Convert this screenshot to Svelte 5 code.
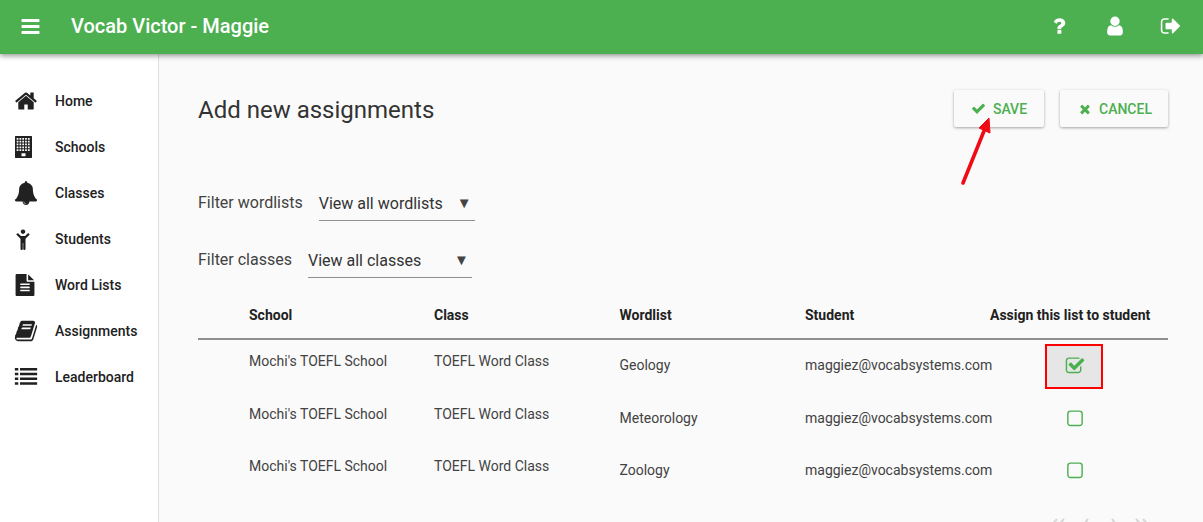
<script>
	// windows of the building icon, 5 x 5 grid plus a door
	let buildingPath = 'M105 75h1209q30 0 30 30v1582q0 30-30 30h-1209q-30 0-30-30v-1582q0-30 30-30z';
	for (let r = 0; r < 5; r++) {
		for (let c = 0; c < 5; c++) {
			buildingPath += `M${200 + c * 210} ${220 + r * 210}h130v130h-130z`;
		}
	}
	buildingPath += 'M560 1360h300v220h-300z';

	const icons = {
		home: 'M1472 992v480q0 26-19 45t-45 19h-384v-384h-256v384h-384q-26 0-45-19t-19-45v-480q0-1 .5-3t.5-3l575-474 575 474q1 2 1 6zm223-69l-62 74q-8 9-21 11h-3q-13 0-21-7l-692-577-692 577q-12 8-24 7-13-2-21-11l-62-74q-8-10-7-23.5t11-21.5l719-599q32-26 76-26t76 26l244 204v-195q0-14 9-23t23-9h192q14 0 23 9t9 23v408l219 182q10 8 11 21.5t-7 23.5z',
		bars: 'M1664 1344v128q0 26-19 45t-45 19h-1408q-26 0-45-19t-19-45v-128q0-26 19-45t45-19h1408q26 0 45 19t19 45zm0-512v128q0 26-19 45t-45 19h-1408q-26 0-45-19t-19-45v-128q0-26 19-45t45-19h1408q26 0 45 19t19 45zm0-512v128q0 26-19 45t-45 19h-1408q-26 0-45-19t-19-45v-128q0-26 19-45t45-19h1408q26 0 45 19t19 45z',
		check: 'M1671 566q0 40-28 68l-724 724-136 136q-28 28-68 28t-68-28l-136-136-362-362q-28-28-28-68t28-68l136-136q28-28 68-28t68 28l294 295 656-657q28-28 68-28t68 28l136 136q28 28 28 68z',
		times: 'M1490 1322q0 40-28 68l-136 136q-28 28-68 28t-68-28l-294-294-294 294q-28 28-68 28t-68-28l-136-136q-28-28-28-68t28-68l294-294-294-294q-28-28-28-68t28-68l136-136q28-28 68-28t68 28l294 294 294-294q28-28 68-28t68 28l136 136q28 28 28 68t-28 68l-294 294 294 294q28 28 28 68z',
		user: 'M1536 1399q0 109-62.5 187t-150.5 78h-854q-88 0-150.5-78t-62.5-187q0-85 8.5-160.5t31.5-152 58.5-131 94-89 134.5-34.5q131 128 313 128t313-128q76 0 134.5 34.5t94 89 58.5 131 31.5 152 8.5 160.5zm-256-887q0 159-112.5 271.5t-271.5 112.5-271.5-112.5-112.5-271.5 112.5-271.5 271.5-112.5 271.5 112.5 112.5 271.5z',
		question: 'M1088 1256v240q0 16-12 28t-28 12h-240q-16 0-28-12t-12-28v-240q0-16 12-28t28-12h240q16 0 28 12t12 28zm316-600q0 54-15.5 101t-35 76.5-55 59.5-57.5 43.5-61 35.5q-41 23-68.5 65t-27.5 67q0 17-12 32.5t-28 15.5h-240q-15 0-25.5-18.5t-10.5-37.5v-45q0-83 65-156.5t143-108.5q59-27 84-56t25-76q0-42-46.5-74t-107.5-32q-65 0-108 29-35 25-107 115-13 16-31 16-12 0-25-8l-164-125q-13-10-15.5-25t5.5-28q160-266 464-266 80 0 161 31t146 83 106 127.5 41 158.5z',
		signout: 'M704 1440q0 4 1 20t.5 26.5-3 23.5-10 19.5-20.5 6.5h-320q-119 0-203.5-84.5t-84.5-203.5v-704q0-119 84.5-203.5t203.5-84.5h320q13 0 22.5 9.5t9.5 22.5q0 4 1 20t.5 26.5-3 23.5-10 19.5-20.5 6.5h-320q-66 0-113 47t-47 113v704q0 66 47 113t113 47h312l11.5 1 11.5 3 8 5.5 7 9 2 13.5zm928-544q0 26-19 45l-544 544q-19 19-45 19t-45-19-19-45v-288h-448q-26 0-45-19t-19-45v-384q0-26 19-45t45-19h448v-288q0-26 19-45t45-19 45 19l544 544q19 19 19 45z',
		bell: 'M912 1696q0-16-16-16-59 0-101.5-42.5t-42.5-101.5q0-16-16-16t-16 16q0 73 51.5 124.5t124.5 51.5q16 0 16-16zm816-288q0 52-38 90t-90 38h-448q0 106-75 181t-181 75-181-75-75-181h-448q-52 0-90-38t-38-90q50-42 91-88t85-119.5 74.5-158.5 50-206 19.5-260q0-152 117-282.5t307-158.5q-8-19-8-39 0-40 28-68t68-28 68 28 28 68q0 20-8 39 190 28 307 158.5t117 282.5q0 139 19.5 260t50 206 74.5 158.5 85 119.5 91 88z',
		file: 'M1596 476q14 14 28 36h-472v-472q22 14 36 28zm-476 164h544v1056q0 40-28 68t-68 28h-1344q-40 0-68-28t-28-68v-1600q0-40 28-68t68-28h800v544q0 40 28 68t68 28zm160 736v-64q0-14-9-23t-23-9h-704q-14 0-23 9t-9 23v64q0 14 9 23t23 9h704q14 0 23-9t9-23zm0-256v-64q0-14-9-23t-23-9h-704q-14 0-23 9t-9 23v64q0 14 9 23t23 9h704q14 0 23-9t9-23zm0-256v-64q0-14-9-23t-23-9h-704q-14 0-23 9t-9 23v64q0 14 9 23t23 9h704q14 0 23-9t9-23z',
		book: 'M1703 478q40 57 18 129l-275 906q-19 64-76.5 107.5t-122.5 43.5h-923q-77 0-148.5-53.5t-99.5-131.5q-24-67-2-127 0-4 3-27t4-37q1-8-3-21.5t-3-19.5q2-11 8-21t16.5-23.5 16.5-23.5q23-38 45-91.5t30-91.5q3-10 .5-30t-.5-28q3-11 17-28t17-23q21-36 42-92t25-90q1-9-2.5-32t.5-28q4-13 22-30.5t22-22.5q19-26 42.5-84.5t27.5-96.5q1-8-3-25.5t-2-26.5q2-8 9-18t18-23 17-21q8-12 16.5-30.5t15-35 16-36 19.5-32 26.5-23.5 36-11.5 47.5 5.5l-1 3q38-9 51-9h761q74 0 114 56t18 130l-274 906q-36 119-71.5 153.5t-128.5 34.5h-869q-27 0-38 15-11 16-1 43 24 70 144 70h923q29 0 56-15.5t35-41.5l300-987q7-22 5-57 38 15 59 43zm-1064 2q-4 13 2 22.5t20 9.5h608q13 0 25.5-9.5t16.5-22.5l21-64q4-13-2-22.5t-20-9.5h-608q-13 0-25.5 9.5t-16.5 22.5zm-83 256q-4 13 2 22.5t20 9.5h608q13 0 25.5-9.5t16.5-22.5l21-64q4-13-2-22.5t-20-9.5h-608q-13 0-25.5 9.5t-16.5 22.5z',
		building: buildingPath,
		child: 'M672 180a170 170 0 1 0 .01 0zM170 560L280 450L520 680H824L1064 450L1175 560L860 880V1650q0 70-90 70q-80 0-80-70V1200H655V1650q0 70-80 70q-90 0-90-70V880Z',
		list: 'M64 224h256v192h-256zM448 224h1280v192h-1280zM64 576h256v192h-256zM448 576h1280v192h-1280zM64 928h256v192h-256zM448 928h1280v192h-1280zM64 1280h256v192h-256zM448 1280h1280v192h-1280z',
		checked: 'M1472 930v318q0 119-84.5 203.5t-203.5 84.5h-832q-119 0-203.5-84.5t-84.5-203.5v-832q0-119 84.5-203.5t203.5-84.5h832q63 0 117 25 15 7 18 23 3 17-9 29l-49 49q-10 10-23 10-3 0-9-2-23-6-45-6h-832q-66 0-113 47t-47 113v832q0 66 47 113t113 47h832q66 0 113-47t47-113v-254q0-13 9-22l64-64q10-10 23-10 6 0 12 3 20 8 20 29zm231-489l-814 814q-24 24-57 24t-57-24l-430-430q-24-24-24-57t24-57l110-110q24-24 57-24t57 24l263 263 647-647q24-24 57-24t57 24l110 110q24 24 24 57t-24 57z',
		square: 'M1312 256h-832q-66 0-113 47t-47 113v832q0 66 47 113t113 47h832q66 0 113-47t47-113v-832q0-66-47-113t-113-47zm288 160v832q0 119-84.5 203.5t-203.5 84.5h-832q-119 0-203.5-84.5t-84.5-203.5v-832q0-119 84.5-203.5t203.5-84.5h832q119 0 203.5 84.5t84.5 203.5z'
	};

	const nav = [
		['home', 'Home', 24],
		['building', 'Schools', 24],
		['bell', 'Classes', 24],
		['child', 'Students', 24],
		['file', 'Word Lists', 22],
		['book', 'Assignments', 24],
		['list', 'Leaderboard', 24]
	];

	const rows = [
		{ wordlist: 'Geology', on: true },
		{ wordlist: 'Meteorology', on: false },
		{ wordlist: 'Zoology', on: false }
	];

	const pager = ['M12 3L5 11M19 3L12 11', 'M13 3L7 11', 'M7 3L13 11', 'M1 3L8 11M8 3L15 11'];
</script>

{#snippet icon(name, size)}
	<svg width={size} height={size} viewBox="0 0 1792 1792" fill="currentColor" fill-rule="evenodd"><path d={icons[name]} /></svg>
{/snippet}

<div class="page">
	<header class="toolbar">
		<span class="menu">{@render icon('bars', 21)}</span>
		<h1>Vocab Victor - Maggie</h1>
		<div class="tools">
			{@render icon('question', 22)}
			{@render icon('user', 22)}
			{@render icon('signout', 22)}
		</div>
	</header>

	<div class="body">
		<nav class="sidebar">
			{#each nav as [name, label, size]}
				<a class="nav-item" href="#{name}">
					<span class="nav-icon">{@render icon(name, size)}</span>
					<span>{label}</span>
				</a>
			{/each}
		</nav>

		<main class="content">
			<div class="head">
				<h2>Add new assignments</h2>
				<div class="actions">
					<button class="save">{@render icon('check', 15)}<span>SAVE</span></button>
					<button class="cancel">{@render icon('times', 14)}<span>CANCEL</span></button>
				</div>
			</div>

			<div class="filter first">
				<span class="filter-label">Filter wordlists</span>
				<div class="select wide"><span>View all wordlists</span><i>▼</i></div>
			</div>
			<div class="filter">
				<span class="filter-label">Filter classes</span>
				<div class="select"><span>View all classes</span><i>▼</i></div>
			</div>

			<div class="table">
				<div class="row header">
					<span>School</span>
					<span>Class</span>
					<span>Wordlist</span>
					<span>Student</span>
					<span class="assign-head">Assign this list to student</span>
				</div>
				{#each rows as row}
					<div class="row">
						<span class="raised">Mochi's TOEFL School</span>
						<span class="raised">TOEFL Word Class</span>
						<span>{row.wordlist}</span>
						<span>maggiez@vocabsystems.com</span>
						<span class="assign">
							<span class="box" class:active={row.on}>
								{@render icon(row.on ? 'checked' : 'square', 20)}
							</span>
						</span>
					</div>
				{/each}
			</div>

			<div class="pager">
				{#each pager as d}
					<svg width="20" height="20" viewBox="0 0 20 20" fill="none" stroke="#d8d8d8" stroke-width="2.2"><path {d} /></svg>
				{/each}
			</div>

			<svg class="arrow" width="40" height="76" viewBox="0 0 40 76">
				<path d="M6 70 L27 18" stroke="#f00a14" stroke-width="3.6" stroke-linecap="round" />
				<path d="M32 5 L33 20 L22 15 Z" fill="#f00a14" stroke="#f00a14" stroke-width="1" />
			</svg>
		</main>
	</div>
</div>

<style>
	:global(body) {
		overflow: hidden;
		font-family: Roboto, sans-serif;
	}

	.page {
		display: flex;
		flex-direction: column;
		height: 522px;
		overflow: hidden;
		background: #fafafa;
		color: #212121;
	}

	.toolbar {
		position: relative;
		z-index: 2;
		display: flex;
		align-items: center;
		flex: 0 0 54px;
		box-sizing: border-box;
		padding-bottom: 2px;
		background: #4caf50;
		color: #fff;
		box-shadow: 0 2px 5px rgba(0, 0, 0, 0.4);
	}

	.menu {
		display: flex;
		margin-left: 20px;
	}

	h1 {
		margin: 0 0 0 30px;
		font-size: 20px;
		font-weight: 500;
	}

	.tools {
		display: flex;
		gap: 34px;
		margin-left: auto;
		margin-right: 21px;
	}

	.body {
		display: flex;
		flex: 1;
		min-height: 0;
	}

	.sidebar {
		flex: 0 0 158px;
		padding-top: 24px;
		background: #fff;
		border-right: 1px solid #e0e0e0;
	}

	.nav-item {
		display: flex;
		align-items: center;
		height: 46px;
		padding-left: 14px;
		color: #212121;
		font-size: 14px;
		font-weight: 500;
		text-decoration: none;
	}

	.nav-icon {
		display: flex;
		width: 41px;
	}

	.content {
		position: relative;
		flex: 1;
		padding: 0 35px 0 39px;
		min-width: 0;
	}

	.head {
		display: flex;
		justify-content: space-between;
		padding-top: 36px;
	}

	h2 {
		margin: 3px 0 0;
		font-size: 24px;
		font-weight: 400;
		line-height: 34px;
		color: #333;
	}

	.actions {
		display: flex;
		gap: 16px;
	}

	button {
		display: flex;
		align-items: center;
		justify-content: center;
		gap: 7px;
		height: 37px;
		border: 0;
		border-radius: 2px;
		background: #fafafa;
		color: #4caf50;
		font: 500 14px Roboto, sans-serif;
		box-shadow: 0 1px 3px rgba(0, 0, 0, 0.35);
	}

	.save {
		width: 90px;
	}

	.cancel {
		width: 108px;
		padding-left: 8px;
	}

	.filter {
		display: flex;
		align-items: flex-start;
		gap: 16px;
		margin-top: 22px;
		font-size: 16px;
	}

	.first {
		margin-top: 59px;
	}

	.filter-label {
		line-height: 34px;
		color: #424242;
	}

	.select {
		display: flex;
		justify-content: space-between;
		width: 164px;
		height: 34px;
		line-height: 35px;
		border-bottom: 1px solid #8f8f8f;
		color: #333;
	}

	.wide {
		width: 156px;
	}

	.select i {
		margin-right: 3px;
		font-size: 15px;
		font-style: normal;
		color: #444;
	}

	.table {
		margin-top: 13px;
	}

	.row {
		display: grid;
		grid-template-columns: 51px 185px 185.5px 185.5px 185px 1fr;
		align-items: center;
		box-sizing: border-box;
		height: 52.5px;
		padding-bottom: 2px;
		font-size: 14px;
		color: #424242;
	}

	.row::before {
		content: '';
	}

	.row.header {
		height: 49px;
		padding-bottom: 0;
		border-bottom: 2px solid #8f8f8f;
		font-weight: 700;
		color: #212121;
	}

	.assign-head {
		justify-self: end;
		padding-right: 19px;
		white-space: nowrap;
	}

	.raised {
		transform: translateY(-4px);
	}

	.assign {
		display: flex;
		justify-content: center;
		padding-top: 2px;
		padding-right: 11px;
	}

	.box {
		display: flex;
		align-items: center;
		justify-content: center;
		width: 58px;
		height: 45px;
		box-sizing: border-box;
		padding-left: 2px;
		color: #4caf50;
	}

	.box.active {
		background: #e6e6e6;
		border: 2px solid #f00;
	}

	.pager {
		display: flex;
		justify-content: flex-end;
		gap: 10px;
		margin-top: 18px;
		padding-right: 13px;
	}

	.arrow {
		position: absolute;
		top: 59px;
		left: 798px;
	}
</style>
